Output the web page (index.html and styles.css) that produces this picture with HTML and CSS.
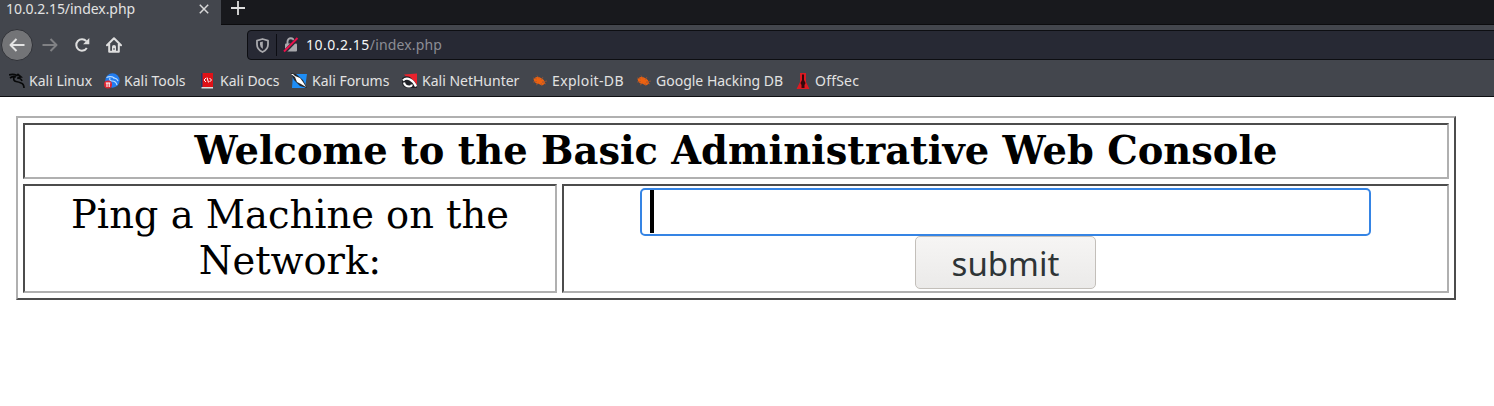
FILE: index.html
```html
<!DOCTYPE html>
<html lang="en">
<head>
<meta charset="utf-8">
<title>10.0.2.15/index.php</title>
<link rel="stylesheet" href="styles.css">
</head>
<body>
<header class="browser">
  <div class="tabs">
    <div class="tab"><span class="tab-title">10.0.2.15/index.php</span>
      <svg class="close" width="10" height="10" viewBox="0 0 10 10"><path d="M.8.8l8.4 8.4M9.2.8L.8 9.2" stroke="#d8d8d9" stroke-width="1.5"/></svg>
    </div>
    <svg class="plus" width="14" height="14" viewBox="0 0 14 14"><path d="M7 0v14M0 7h14" stroke="#dedede" stroke-width="1.8"/></svg>
  </div>
  <nav class="toolbar">
    <span class="back"><svg width="16" height="16" viewBox="0 0 16 16"><path d="M15.500 8H1.500M7.500 2L1.500 8l6 6" fill="none" stroke="#e3e3e3" stroke-width="2" stroke-linejoin="round"/></svg></span>
    <svg class="forward" width="16" height="16" viewBox="0 0 16 16"><path d="M.5 8h14M8.500 2l6 6-6 6" fill="none" stroke="#808184" stroke-width="2" stroke-linejoin="round"/></svg>
    <svg class="reload" width="16" height="16" viewBox="0 0 16 16"><path d="M12.300 4.200A5.700 5.700 0 1 0 12.800 11" fill="none" stroke="#dedede" stroke-width="2"/><path d="M15.300 1v6.200H9.100z" fill="#dedede"/></svg>
    <svg class="home" width="16" height="16" viewBox="0 0 16 16"><path d="M1 8.200L8 1.200l7 7M3.200 7v7.700h9.600V7" fill="none" stroke="#dedede" stroke-width="2" stroke-linejoin="round" stroke-linecap="round"/><path d="M6 15V9.500q0-1.500 2-1.500t2 1.500V15z" fill="#dedede"/><path d="M8 11v2" stroke="#42454b"/></svg>
    <div class="address">
      <svg class="shield" width="13" height="15" viewBox="0 0 13 15"><path d="M6.500 1L12 2.600v3.800q0 4.800-5.500 7.600Q1 11.200 1 6.400V2.600z" fill="none" stroke="#a9a9ad" stroke-width="1.800" stroke-linejoin="round"/><path d="M6.800 3.500L4 4.300v2.200q0 2.600 2.800 4.500z" fill="#a9a9ad"/></svg>
      <span class="divider"></span>
      <svg class="lock" width="16" height="16" viewBox="0 0 16 16"><path d="M4.500 7V4.500a3.300 3.300 0 0 1 6.600 0V7" fill="none" stroke="#a9a9ad" stroke-width="1.900"/><rect x="2" y="6.500" width="12" height="8" rx="1" fill="#a9a9ad"/><path d="M1.500 15L14.500 1.500" stroke="#272934" stroke-width="3.600"/><path d="M1 14.500L14.500 1" stroke="#e8104a" stroke-width="2"/></svg>
      <span class="url">10.0.2.15<span class="path">/index.php</span></span>
    </div>
  </nav>
  <div class="bookmarks">
    <div class="bm linux"><svg width="16" height="16" viewBox="0 0 16 16"><path d="M0 2q4-1.500 8 .5l1-1 3 2.500-3 .5M1 5q3-2 6-1M5 4q-1 4 2 4.500 3 .5 5 1.500 3 1 3 5M8 5q4 0 5 3" stroke="#08090a" stroke-width="1.700" fill="none"/></svg><span>Kali Linux</span></div>
    <div class="bm tools"><svg width="16" height="16" viewBox="0 0 16 16"><circle cx="8.500" cy="7.500" r="7.200" fill="#237df0"/><path d="M2.500 4.500q4-2 8 .5M6 5q-1 3 2 3 4 0 5 4M9 5q4 0 5 3" stroke="#b9dcff" stroke-width="1.200" fill="none"/><circle cx="4" cy="11.500" r="4" fill="#df2430"/><path d="M1.800 10h4.500M3 10v4M5.200 10v4" stroke="#fff" stroke-width="1.100"/></svg><span>Kali Tools</span></div>
    <div class="bm docs"><svg width="16" height="16" viewBox="0 0 16 16"><path d="M1 0h2v15H1z" fill="#203667"/><path d="M2.500 0h10.500v14H2.500z" fill="#df1117"/><path d="M1.500 14h11.500v1.500H1.500z" fill="#ddd"/><path d="M6 5L4 7l2 2M9.500 5l2 2-2 2M7 4.500L8.500 9.500" fill="none" stroke="#fff"/></svg><span>Kali Docs</span></div>
    <div class="bm forums"><svg width="17" height="16" viewBox="0 0 17 16"><path d="M2 1h14l-2 14H1z" fill="#1e8df5"/><path d="M0 0l5 1 7 6 4 8-7-2-6-6z" fill="#26282c"/><path d="M0 1l2 0 2 2 5 2 3 4 3 5-5-3-4-2-2-5z" fill="#fff"/></svg><span>Kali Forums</span></div>
    <div class="bm nethunter"><svg width="16" height="16" viewBox="0 0 16 16"><path d="M2 1.500L15 .5v13.500z" fill="#e9222d"/><path d="M0 5q4-3 8-1l3 3q4 3 4 8H7Q0 15 0 9z" fill="#202228"/><path d="M1 7.500Q4 4.500 8 6.500q4 2 6 7M2 9.500q1 4 5 4 3 0 2.500-2" fill="none" stroke="#fff" stroke-width="2.200"/></svg><span>Kali NetHunter</span></div>
    <div class="bm exploit"><svg width="16" height="16" viewBox="0 0 16 16"><path d="M1.500 6.500Q4 2.500 8 4.500q5 2 5 6-3 3-6 .5-4 0-5.500-4.500z" fill="#ed610f"/><path d="M1 5l4 1M5 2.500l2 3M1 9l4-.5M4 12l3-2M11 4l-2 3M15 8l-5 1M10 13l-1-3M14 11l-4-2" stroke="#a9572f" stroke-width=".7"/></svg><span>Exploit-DB</span></div>
    <div class="bm google"><svg width="16" height="16" viewBox="0 0 16 16"><path d="M1.500 6.500Q4 2.500 8 4.500q5 2 5 6-3 3-6 .5-4 0-5.500-4.500z" fill="#ed610f"/><path d="M1 5l4 1M5 2.500l2 3M1 9l4-.5M4 12l3-2M11 4l-2 3M15 8l-5 1M10 13l-1-3M14 11l-4-2" stroke="#a9572f" stroke-width=".7"/></svg><span>Google Hacking DB</span></div>
    <div class="bm offsec"><svg width="15" height="16" viewBox="0 0 15 16"><path d="M4 0h6v9l3.500 7H.5L4 9z" fill="#dc1a22"/><path d="M6 1.500h2V7l1.500 3L8.500 12v3h-3v-3L4.500 10 6 7z" fill="#33090c"/></svg><span>OffSec</span></div>
  </div>
</header>
<main class="console">
  <h1 class="cell heading"><span>Welcome to the Basic Administrative Web Console</span></h1>
  <div class="cell prompt">Ping a Machine on the<br>Network:</div>
  <form class="cell controls">
    <div class="field"><span class="caret"></span></div>
    <button type="button" class="submit">submit</button>
  </form>
</main>
</body>
</html>
```
FILE: styles.css
```css
* { box-sizing: border-box; }
body { margin: 0; background: #fff; height: 406px; overflow: hidden; }
svg { display: block; flex: none; }
.browser { height: 97px; background: #43464d; border-bottom: 1px solid #0e0f12; font: 14px/20px "Noto Sans", sans-serif; color: #e2e2e2; white-space: nowrap; overflow: hidden; }
.tabs { display: flex; height: 25px; background: #18191d; border-bottom: 1px solid #0c0c0e; }
.tab { display: flex; width: 221px; height: 25px; padding-left: 6px; background: #43464d; }
.tab-title { width: 193px; margin-top: -1px; letter-spacing: -.05px; }
.close { margin-top: 4px; }
.plus { margin: 1px 0 0 10px; }
.toolbar { display: flex; height: 40px; align-items: center; padding-left: 1px; }
.back { display: flex; flex: none; align-items: center; justify-content: center; width: 32px; height: 32px; border-radius: 50%; background: #737477; border: 1px solid #303238; }
.forward { margin-left: 9px; }
.reload { margin-left: 16px; }
.home { margin-left: 16px; }
.address { display: flex; align-items: center; width: 1260px; flex: none; margin-left: 125px; height: 30px; border: 1px solid #0d0e12; border-radius: 4px; background: #272934; padding-left: 8px; }
.divider { width: 1px; height: 22px; margin: 0 6px 0 7px; background: #0c0d13; }
.url { margin-left: 7px; color: #f5f5f6; letter-spacing: .5px; }
.path { color: #8c8d94; letter-spacing: .14px; }
.bookmarks { display: flex; height: 31px; padding-left: 9px; }
.bm { display: flex; align-items: center; gap: 4px; flex: none; }
.linux { width: 95px; }
.tools { width: 96px; }
.docs { width: 91px; }
.forums { width: 111px; gap: 4px; }
.nethunter { width: 130px; }
.exploit { width: 104px; letter-spacing: .35px; }
.google { width: 160px; }
.offsec { letter-spacing: .2px; }
.console { display: grid; grid-template-columns: 534px 887px; grid-template-rows: 56px 109px; gap: 5px; width: 1440px; height: 184px; margin: 19px 0 0 16px; padding: 5px; border: 2px solid; border-color: #b0b0b0 #4c4c4c #4c4c4c #b0b0b0; font-family: "DejaVu Serif", serif; color: #000; }
.cell { margin: 0; border: 2px solid; border-color: #4c4c4c #b0b0b0 #b0b0b0 #4c4c4c; text-align: center; }
.heading { grid-column: 1 / 3; padding-top: 1px; font-size: 38.4px; line-height: 50px; white-space: nowrap; }
.prompt { padding-top: 6px; font-size: 38.4px; line-height: 46px; }
.controls { display: flex; flex-direction: column; align-items: center; padding-top: 2px; }
.field { width: 731px; height: 48px; flex: none; border: 2px solid #3584e4; border-radius: 5px; padding-left: 8px; }
.caret { display: block; width: 4px; height: 43px; background: #000; }
.submit { width: 181px; height: 53px; flex: none; padding: 2px 0 0; border: 1px solid #c3bfba; border-radius: 5px; background: linear-gradient(#f6f5f4, #ebeae9); color: #2e3436; font: 33px/49px "Noto Sans", sans-serif; }
```
